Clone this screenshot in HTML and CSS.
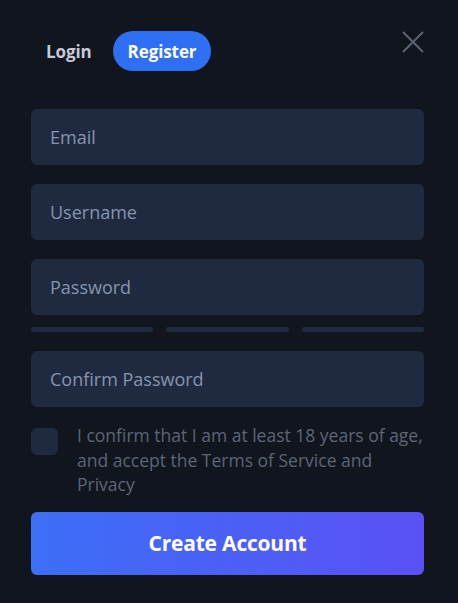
FILE: index.html
```html
<!DOCTYPE html>
<html lang="en">
<head>
  <meta charset="UTF-8">
  <meta name="viewport" content="width=device-width, initial-scale=1.0">
  <title>Register</title>
  <link rel="stylesheet" href="styles.css">
</head>
<body>
  <div class="modal">
    <div class="modal-head">
      <div class="tabs">
        <button class="tab">Login</button>
        <button class="tab active">Register</button>
      </div>
      <button class="close" aria-label="Close">
        <svg width="22" height="22" viewBox="0 0 22 22"><path d="M1.5 1.5L20.5 20.5M20.5 1.5L1.5 20.5" stroke="#5b6271" stroke-width="2" stroke-linecap="round"/></svg>
      </button>
    </div>

    <form class="register-form">
      <input class="field" type="email" placeholder="Email">
      <input class="field" type="text" placeholder="Username">
      <div class="password-group">
        <input class="field" type="password" placeholder="Password">
        <div class="strength">
          <span></span><span></span><span></span>
        </div>
      </div>
      <input class="field" type="password" placeholder="Confirm Password">

      <label class="confirm">
        <span class="checkbox"></span>
        <span class="confirm-text">I confirm that I am at least 18 years of age, and accept the Terms of Service and Privacy</span>
      </label>

      <button type="button" class="submit">Create Account</button>
    </form>
  </div>
</body>
</html>
```

FILE: styles.css
```css
body {
    margin: 0;
    padding: 0;
    background-color: #11151e;
    font-family: "Open Sans", Arial, sans-serif;
    color: #fff;
}

.modal {
    width: 393px;
    padding: 31px 0 0 31px;
}

.modal-head {
    display: flex;
    justify-content: space-between;
    align-items: flex-start;
    height: 40px;
    margin-bottom: 38px;
}

.tabs {
    display: flex;
    align-items: center;
    gap: 6px;
}

.tab {
    font-family: inherit;
    font-size: 17px;
    font-weight: 700;
    border: none;
    background: none;
    color: #c4cad6;
    height: 40px;
    padding: 0 15px;
    border-radius: 20px;
    cursor: pointer;
    letter-spacing: -0.1px;
}

.tab.active {
    background-color: #2e6ff4;
    color: #fff;
}

.close {
    border: none;
    background: none;
    padding: 0;
    width: 22px;
    height: 22px;
    cursor: pointer;
}

.register-form {
    display: flex;
    flex-direction: column;
    gap: 19px;
}

.field {
    box-sizing: border-box;
    width: 100%;
    height: 56px;
    border: none;
    border-radius: 6px;
    background-color: #1f2a40;
    padding: 0 19px;
    font-family: inherit;
    font-size: 18px;
    color: #fff;
    outline: none;
}

.field::placeholder {
    color: #8794ad;
}

.password-group {
    display: flex;
    flex-direction: column;
    gap: 12px;
}

.strength {
    display: flex;
    gap: 13px;
}

.strength span {
    flex: 1;
    height: 5px;
    border-radius: 2px;
    background-color: #1f2a40;
}

.confirm {
    display: flex;
    gap: 19px;
    align-items: flex-start;
    cursor: pointer;
    margin-bottom: -4px;
}

.checkbox {
    flex: none;
    width: 27px;
    height: 27px;
    border-radius: 6px;
    background-color: #1f2a40;
    margin-top: 2px;
}

.confirm-text {
    font-size: 17.5px;
    line-height: 24.5px;
    color: #5d6577;
    margin-top: -3px;
}

.submit {
    height: 63px;
    border: none;
    border-radius: 6px;
    background: linear-gradient(90deg, #3c6ff6, #5a51f5);
    color: #fff;
    font-family: inherit;
    font-size: 21px;
    font-weight: 700;
    letter-spacing: -0.2px;
    cursor: pointer;
}
```
